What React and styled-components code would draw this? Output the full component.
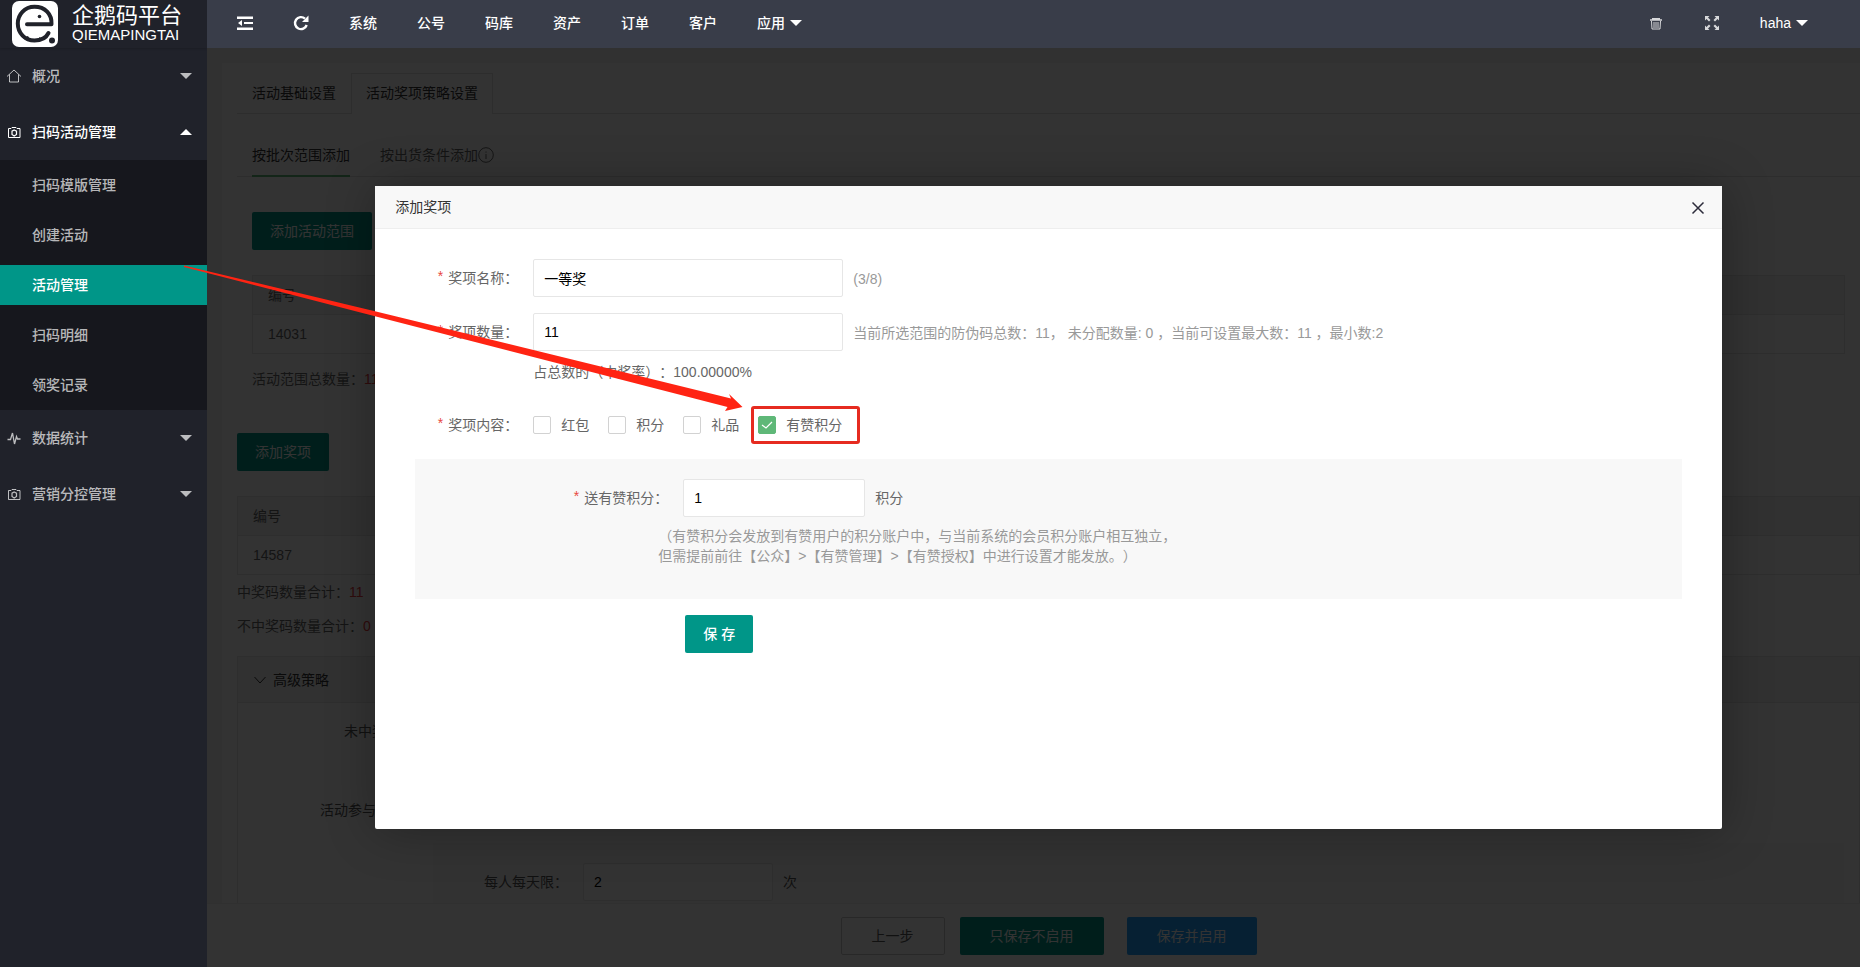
import React, { useState } from "react";
import styled, { createGlobalStyle, css } from "styled-components";

const GlobalStyle = createGlobalStyle`
  *, *::before, *::after { box-sizing: border-box; }
  body {
    margin: 0;
    font: 14px/20px "Liberation Sans", "Noto Sans CJK SC", sans-serif;
    color: #333;
    text-spacing-trim: space-all;
  }
  button, input { font: inherit; color: inherit; }
  ul { margin: 0; padding: 0; list-style: none; }
  a { color: inherit; text-decoration: none; }
`;

const Shell = styled.div`
  position: relative;
  display: flex;
  height: 100vh;
  overflow: hidden;
`;

/* ---------- sidebar ---------- */

const Sidebar = styled.aside`
  flex: none;
  width: 207px;
  background: #20222a;
  color: rgba(255, 255, 255, 0.7);
  font-weight: 500;
`;

const Logo = styled.a`
  display: flex;
  align-items: center;
  gap: 14px;
  height: 48px;
  padding: 0 12px;
  color: #fff;
  font-weight: 400;
  box-shadow: 0 1px 2px rgba(0, 0, 0, 0.15);
`;

const LogoText = styled.span`
  display: flex;
  flex-direction: column;
  white-space: nowrap;
`;

const LogoName = styled.span`
  font-size: 22px;
  line-height: 22px;
`;

const LogoLatin = styled.span`
  font-size: 15px;
  line-height: 16px;
`;

const NavLink = styled.a`
  display: flex;
  align-items: center;
  height: 56px;
  padding: 0 15px 0 6px;
  color: ${(p) => (p.$open ? "#fff" : "inherit")};
`;

const NavIcon = styled.span`
  display: flex;
  width: 26px;
`;

const NavLabel = styled.span`
  flex: 1;
`;

const Caret = styled.i`
  width: 0;
  height: 0;
  border: 6px solid transparent;
  ${(p) =>
    p.$up
      ? css`
          border-top-width: 0;
          border-bottom-color: currentColor;
        `
      : css`
          border-bottom-width: 0;
          border-top-color: currentColor;
        `}
`;

const SubNav = styled.ul`
  display: flex;
  flex-direction: column;
  gap: 10px;
  padding: 5px 0;
  background: rgba(0, 0, 0, 0.3);
`;

const SubNavLink = styled.a`
  display: block;
  padding-left: 32px;
  line-height: 40px;
  color: ${(p) => (p.$active ? "#fff" : "inherit")};
  background: ${(p) => (p.$active ? "#009688" : "transparent")};
`;

/* ---------- header ---------- */

const Main = styled.div`
  flex: 1;
  min-width: 0;
  display: flex;
  flex-direction: column;
`;

const Header = styled.header`
  flex: none;
  display: flex;
  justify-content: space-between;
  height: 48px;
  padding: 0 32px 0 10px;
  background: #393d49;
  color: #fff;
  font-weight: 500;
`;

const HeaderGroup = styled.nav`
  display: flex;
`;

const HeaderLink = styled.a`
  display: flex;
  align-items: center;
  gap: 5px;
  height: 46px;
  padding: 0 20px;
`;

/* ---------- page behind the dialog ---------- */

const Viewport = styled.div`
  flex: 1;
  min-height: 0;
  overflow: hidden;
`;

const Frame = styled.div`
  position: relative;
  display: flex;
  flex-direction: column;
  width: calc(100% + 30px);
  height: 100%;
  background: #f2f2f2;
`;

const PageBody = styled.div`
  flex: 1;
  min-height: 0;
  padding: 15px 15px 0;
  overflow: hidden;
`;

const Card = styled.section`
  padding: 10px 15px;
  background: #fff;
`;

const Tabs = styled.ul`
  display: flex;
  height: 41px;
  border-bottom: 1px solid #e2e2e2;
`;

const Tab = styled.li`
  height: 41px;
  padding: 0 15px;
  line-height: 40px;
  ${(p) =>
    p.$active &&
    css`
      padding: 0 14px;
      line-height: 38px;
      background: #fff;
      border: 1px solid #e2e2e2;
      border-bottom: 0;
    `}
`;

const BriefTabs = styled(Tabs)`
  height: 43px;
  margin-top: 20px;
  padding-left: 15px;
  gap: 30px;
`;

const BriefTab = styled.li`
  display: flex;
  align-items: center;
  height: 43px;
  color: ${(p) => (p.$active ? "#333" : "#666")};
  border-bottom: 2px solid ${(p) => (p.$active ? "#5fb878" : "transparent")};
`;

const RangeSection = styled.div`
  padding: 35px 15px 44px;
`;

const Button = styled.button`
  height: 38px;
  padding: 0 ${(p) => (p.$wide ? 30 : 18)}px;
  border: 0;
  border-radius: 2px;
  background: ${(p) => p.$color || "#009688"};
  color: #fff;
  white-space: nowrap;
`;

const SaveButton = styled(Button)`
  font-weight: 500;
`;

const PlainButton = styled(Button)`
  padding: 0 30px;
  background: #fff;
  border: 1px solid #c9c9c9;
  color: #555;
`;

const Table = styled.table`
  width: 100%;
  margin-top: 25px;
  border-collapse: collapse;
  border: 1px solid #e6e6e6;
  color: #666;
  text-align: left;

  th, td {
    height: 39px;
    padding: 0 15px;
    font-weight: 400;
    border-bottom: 1px solid #e6e6e6;
  }
  thead tr { background: #f2f2f2; }
`;

const RangeTotal = styled.p`
  margin: 15px 0 0;
  color: #666;
`;

const PrizeTotals = styled.div`
  display: flex;
  flex-direction: column;
  gap: 14px;
  padding: 7px 0 20px;
  color: #666;
`;

const Count = styled.span`
  color: #e83c3c;
`;

const Panel = styled.section`
  border: 1px solid #e6e6e6;
`;

const PanelTitle = styled.h2`
  display: flex;
  align-items: center;
  gap: 7px;
  height: 45px;
  margin: 0;
  padding-left: 16px;
  background: #f2f2f2;
  font-size: 14px;
  font-weight: 400;
`;

const PanelBody = styled.div`
  padding: 9px 15px 0 0;
  border-top: 1px solid #e6e6e6;
  color: #555;
`;

const PanelRow = styled.div`
  height: 38px;
  margin-bottom: ${(p) => p.$gap}px;
  padding-left: ${(p) => p.$indent}px;
  line-height: 38px;
`;

const LimitBox = styled.div`
  display: flex;
  align-items: center;
  margin-left: 195px;
  padding: 20px 0 40px;
  background: #f8f8f8;
`;

const Footer = styled.footer`
  flex: none;
  display: flex;
  justify-content: center;
  gap: 15px;
  height: 64px;
  padding: 13px 0;
  background: #fff;
  border-top: 1px solid #eee;
`;

const FooterActions = styled.div`
  display: flex;
  gap: 23px;
`;

/* ---------- dialog ---------- */

const Mask = styled.div`
  position: absolute;
  inset: 0;
  display: flex;
  align-items: center;
  justify-content: center;
  background: rgba(0, 0, 0, 0.8);
`;

const Dialog = styled.div`
  display: flex;
  flex-direction: column;
  width: 80%;
  height: 70%;
  background: #fff;
  border-radius: 2px;
  box-shadow: 1px 1px 50px rgba(0, 0, 0, 0.3);
`;

const DialogHeader = styled.header`
  flex: none;
  display: flex;
  align-items: center;
  justify-content: space-between;
  height: 43px;
  padding: 0 16px 0 20px;
  background: #f8f8f8;
  border-bottom: 1px solid #eee;
`;

const DialogTitle = styled.h1`
  margin: 0;
  font-size: 14px;
  font-weight: 400;
`;

const CloseButton = styled.button`
  display: flex;
  padding: 0;
  border: 0;
  background: none;
`;

const Form = styled.form`
  flex: 1;
  padding: 30px 40px;
  color: #666;
`;

const Row = styled.div`
  display: flex;
  align-items: center;
  margin-bottom: ${(p) => p.$gap || 0}px;
`;

const Label = styled.label`
  flex: none;
  width: ${(p) => p.$width}px;
  padding-right: 15px;
  text-align: right;
  line-height: 38px;
  white-space: nowrap;
`;

const Star = styled.span`
  margin-right: 5px;
  vertical-align: 2px;
  line-height: 20px;
  color: #e8483f;
`;

const TextInput = styled.input`
  width: ${(p) => p.$width}px;
  height: 38px;
  padding: 0 10px;
  border: 1px solid #e6e6e6;
  border-radius: 2px;
  background: #fff;
  color: #000;
  outline: 0;
`;

const Unit = styled.span`
  margin-left: 10px;
`;

const Hint = styled(Unit)`
  padding-top: 3px;
  color: #999;
`;

const Rate = styled.p`
  margin: 11px 0 24px 118px;
`;

const Choices = styled.div`
  display: flex;
  gap: 19px;
`;

const Choice = styled.label`
  position: relative;
  display: flex;
  align-items: center;
  gap: 10px;
  height: 38px;
`;

const Check = styled.input`
  appearance: none;
  width: 18px;
  height: 18px;
  margin: 0;
  border: 1px solid #d2d2d2;
  border-radius: 2px;
  background: #fff;

  &:checked {
    border-color: #5fb878;
    background: #5fb878
      url("data:image/svg+xml,%3Csvg xmlns='http://www.w3.org/2000/svg' viewBox='0 0 16 16'%3E%3Cpath d='M3 8l4 3 6-6' fill='none' stroke='white' stroke-width='1.2'/%3E%3C/svg%3E")
      center / 16px 16px no-repeat;
  }
`;

const Highlight = styled.span`
  position: absolute;
  inset: 0 -18px 0 -7px;
  border: 3px solid #e62b20;
  border-radius: 3px;
  pointer-events: none;
`;

const PointsBox = styled.fieldset`
  min-height: 140px;
  margin: 15px 0 16px;
  padding: 20px 0;
  border: 0;
  background: #f8f8f8;
`;

const Note = styled.p`
  margin: 9px 0 0 243px;
  color: #999;
`;

const SaveRow = styled.div`
  padding-left: 270px;
`;

const Arrow = styled.svg`
  position: absolute;
  top: 0;
  left: 0;
  pointer-events: none;
`;

/* ---------- icons ---------- */

const LogoMark = () => (
  <svg width="46" height="46" viewBox="0 0 46 46" aria-hidden="true">
    <rect width="46" height="46" rx="7" fill="#fff" />
    <path
      d="M15 23.200 H39.500 C40 13 33 5.800 22.500 5.800 C12.500 5.800 5.800 13.500 5.800 22.500 C5.800 32 13 39.500 22.500 39.500 C29.500 39.500 34.500 36 36.500 32"
      fill="none"
      stroke="#20222a"
      strokeWidth="4"
      strokeLinecap="round"
      strokeLinejoin="round"
    />
    <path d="M9 34 Q13 37 16 35 Q18 39 22 38 Q25 39 28 36 L29 39 L22 41 L13 39 Z" fill="#20222a" />
    <circle cx="27.500" cy="15.500" r="1.800" fill="#20222a" />
    <circle cx="40" cy="39.500" r="3" fill="#20222a" />
  </svg>
);

const HomeIcon = () => (
  <svg width="16" height="16" viewBox="0 0 16 16" fill="none" stroke="currentColor">
    <path d="M1 8.500 L8 2 L15 8.500 M3.500 6.500 V14 H12.500 V6.500" />
  </svg>
);

const CameraIcon = () => (
  <svg width="16" height="16" viewBox="0 0 16 16" fill="none" stroke="currentColor">
    <path d="M2.500 4.500 H5 L6 3.500 H10 L11 4.500 H14 V13.500 H2.500 Z" />
    <path d="M8.200 6 L10.500 7.200 V10.500 L8.200 12 L6 10.500 V7.200 Z" strokeWidth="1.200" />
  </svg>
);

const PulseIcon = () => (
  <svg width="16" height="16" viewBox="0 0 16 16" fill="none" stroke="currentColor" strokeWidth="1.300">
    <path d="M1.500 9.500 H4.500 L6.500 3 L8.500 14 L10.500 6.500 L11.500 9 H14.500" />
  </svg>
);

const ShrinkIcon = () => (
  <svg width="16" height="16" viewBox="0 0 16 16" fill="currentColor">
    <path d="M0 1.500 H16 V4 H0 Z M7 7 H16 V9 H7 Z M0 12.500 H16 V15 H0 Z M5 5 V11 L1 8 Z" />
  </svg>
);

const RefreshIcon = () => (
  <svg width="16" height="16" viewBox="0 0 16 16">
    <path d="M12 3.600 A6 6 0 1 0 13.700 10" fill="none" stroke="currentColor" strokeWidth="2.400" />
    <path d="M15.500 0.500 V7 H9 Z" fill="currentColor" />
  </svg>
);

const TrashIcon = () => (
  <svg width="16" height="16" viewBox="0 0 16 16" fill="none" stroke="currentColor" opacity="0.800">
    <path d="M2 5 H14 M4 3.700 H12" strokeWidth="1.500" />
    <path d="M3.500 6 L4 14 H12 L12.500 6 M6 7 V13 M8 7 V13 M10 7 V13" />
  </svg>
);

const ExpandIcon = () => (
  <svg width="16" height="16" viewBox="0 0 16 16" fill="currentColor" opacity="0.800">
    <path d="M1 1 H5.500 L4 2.500 L6.500 5 L5 6.500 L2.500 4 L1 5.500 Z" />
    <path d="M15 1 V5.500 L13.500 4 L11 6.500 L9.500 5 L12 2.500 L10.500 1 Z" />
    <path d="M1 15 V10.500 L2.500 12 L5 9.500 L6.500 11 L4 13.500 L5.500 15 Z" />
    <path d="M15 15 H10.500 L12 13.500 L9.500 11 L11 9.500 L13.500 12 L15 10.500 Z" />
  </svg>
);

const InfoIcon = () => (
  <svg width="16" height="16" viewBox="0 0 16 16" fill="none" stroke="currentColor">
    <circle cx="8" cy="8" r="7.300" />
    <path d="M8 7 V12 M8 4.500 V5.700" />
  </svg>
);

const ChevronIcon = () => (
  <svg width="12" height="12" viewBox="0 0 12 12" fill="none" stroke="currentColor">
    <path d="M0.500 3 L6 9 L11.500 3" />
  </svg>
);

const CloseIcon = () => (
  <svg width="16" height="16" viewBox="0 0 16 16" fill="none" stroke="#2d2c3b" strokeWidth="1.500">
    <path d="M2.500 3.500 L13.500 14.500 M13.500 3.500 L2.500 14.500" />
  </svg>
);

/* ---------- parts ---------- */

const NavItem = ({ icon, label, open, children }) => (
  <li>
    <NavLink href="#" $open={open}>
      <NavIcon>{icon}</NavIcon>
      <NavLabel>{label}</NavLabel>
      <Caret $up={open} />
    </NavLink>
    {children}
  </li>
);

const IdTable = ({ id }) => (
  <Table>
    <thead>
      <tr>
        <th>编号</th>
      </tr>
    </thead>
    <tbody>
      <tr>
        <td>{id}</td>
      </tr>
    </tbody>
  </Table>
);

const SUB_NAV = ["扫码模版管理", "创建活动", "活动管理", "扫码明细", "领奖记录"];
const TOP_NAV = ["系统", "公号", "码库", "资产", "订单", "客户"];
const PRIZES = ["红包", "积分", "礼品", "有赞积分"];

const PrizeDialog = () => {
  const [checked, setChecked] = useState("有赞积分");
  return (
    <Mask>
      <Dialog role="dialog" aria-labelledby="dialog-title">
        <DialogHeader>
          <DialogTitle id="dialog-title">添加奖项</DialogTitle>
          <CloseButton type="button" aria-label="关闭">
            <CloseIcon />
          </CloseButton>
        </DialogHeader>
        <Form onSubmit={(e) => e.preventDefault()}>
          <Row $gap={16}>
            <Label $width={118} htmlFor="prize-name">
              <Star>*</Star>奖项名称：
            </Label>
            <TextInput $width={310} id="prize-name" defaultValue="一等奖" />
            <Hint>(3/8)</Hint>
          </Row>
          <Row>
            <Label $width={118} htmlFor="prize-count">
              <Star>*</Star>奖项数量：
            </Label>
            <TextInput $width={310} id="prize-count" defaultValue="11" />
            <Hint>当前所选范围的防伪码总数：11， 未分配数量: 0 ，当前可设置最大数：11 ，最小数:2</Hint>
          </Row>
          <Rate>占总数的（中奖率）：100.00000%</Rate>
          <Row>
            <Label as="span" $width={118}>
              <Star>*</Star>奖项内容：
            </Label>
            <Choices>
              {PRIZES.map((name) => (
                <Choice key={name}>
                  <Check
                    type="checkbox"
                    checked={checked === name}
                    onChange={() => setChecked(name)}
                  />
                  {name}
                  {name === "有赞积分" && <Highlight />}
                </Choice>
              ))}
            </Choices>
          </Row>
          <PointsBox>
            <Row>
              <Label $width={268} htmlFor="points">
                <Star>*</Star>送有赞积分：
              </Label>
              <TextInput $width={182} id="points" defaultValue="1" />
              <Unit>积分</Unit>
            </Row>
            <Note>
              （有赞积分会发放到有赞用户的积分账户中，与当前系统的会员积分账户相互独立，
              <br />
              但需提前前往【公众】&gt;【有赞管理】&gt;【有赞授权】中进行设置才能发放。）
            </Note>
          </PointsBox>
          <SaveRow>
            <SaveButton type="submit">保 存</SaveButton>
          </SaveRow>
        </Form>
      </Dialog>
    </Mask>
  );
};

export default function App() {
  return (
    <Shell>
      <GlobalStyle />
      <Sidebar>
        <Logo href="#">
          <LogoMark />
          <LogoText>
            <LogoName>企鹅码平台</LogoName>
            <LogoLatin>QIEMAPINGTAI</LogoLatin>
          </LogoText>
        </Logo>
        <ul>
          <NavItem icon={<HomeIcon />} label="概况" />
          <NavItem icon={<CameraIcon />} label="扫码活动管理" open>
            <SubNav>
              {SUB_NAV.map((name) => (
                <li key={name}>
                  <SubNavLink href="#" $active={name === "活动管理"}>
                    {name}
                  </SubNavLink>
                </li>
              ))}
            </SubNav>
          </NavItem>
          <NavItem icon={<PulseIcon />} label="数据统计" />
          <NavItem icon={<CameraIcon />} label="营销分控管理" />
        </ul>
      </Sidebar>

      <Main>
        <Header>
          <HeaderGroup>
            <HeaderLink href="#" aria-label="收起菜单">
              <ShrinkIcon />
            </HeaderLink>
            <HeaderLink href="#" aria-label="刷新">
              <RefreshIcon />
            </HeaderLink>
            {TOP_NAV.map((name) => (
              <HeaderLink href="#" key={name}>
                {name}
              </HeaderLink>
            ))}
            <HeaderLink href="#">
              应用
              <Caret />
            </HeaderLink>
          </HeaderGroup>
          <HeaderGroup>
            <HeaderLink href="#" aria-label="清除缓存">
              <TrashIcon />
            </HeaderLink>
            <HeaderLink href="#" aria-label="全屏">
              <ExpandIcon />
            </HeaderLink>
            <HeaderLink href="#">
              haha
              <Caret />
            </HeaderLink>
          </HeaderGroup>
        </Header>

        <Viewport>
          <Frame>
            <PageBody>
              <Card>
                <Tabs>
                  <Tab>活动基础设置</Tab>
                  <Tab $active>活动奖项策略设置</Tab>
                </Tabs>
                <BriefTabs>
                  <BriefTab $active>按批次范围添加</BriefTab>
                  <BriefTab>
                    按出货条件添加
                    <InfoIcon />
                  </BriefTab>
                </BriefTabs>
                <RangeSection>
                  <Button type="button">添加活动范围</Button>
                  <IdTable id="14031" />
                  <RangeTotal>
                    活动范围总数量：<Count>11</Count>
                  </RangeTotal>
                </RangeSection>
                <Button type="button">添加奖项</Button>
                <IdTable id="14587" />
                <PrizeTotals>
                  <span>
                    中奖码数量合计：<Count>11</Count>
                  </span>
                  <span>
                    不中奖码数量合计：<Count>0</Count>
                  </span>
                </PrizeTotals>
                <Panel>
                  <PanelTitle>
                    <ChevronIcon />
                    高级策略
                  </PanelTitle>
                  <PanelBody>
                    <PanelRow $indent={106} $gap={41}>
                      未中奖
                    </PanelRow>
                    <PanelRow $indent={82} $gap={14}>
                      活动参与
                    </PanelRow>
                    <LimitBox>
                      <Label $width={150} htmlFor="day-limit">
                        每人每天限：
                      </Label>
                      <TextInput $width={190} id="day-limit" defaultValue="2" />
                      <Unit>次</Unit>
                    </LimitBox>
                  </PanelBody>
                </Panel>
              </Card>
            </PageBody>
            <Footer>
              <PlainButton type="button">上一步</PlainButton>
              <FooterActions>
                <Button type="button" $wide>
                  只保存不启用
                </Button>
                <Button type="button" $wide $color="#1e9fff">
                  保存并启用
                </Button>
              </FooterActions>
            </Footer>
            <PrizeDialog />
          </Frame>
        </Viewport>
      </Main>

      <Arrow width="760" height="420" viewBox="0 0 760 420" aria-hidden="true">
        <path
          d="M184 265.500 L376 311.500 L731 398.500 L729 394 L742.500 407 L725 411 L727.500 407 L376 316.500 L184 267 Z"
          fill="#ff2413"
        />
      </Arrow>
    </Shell>
  );
}
